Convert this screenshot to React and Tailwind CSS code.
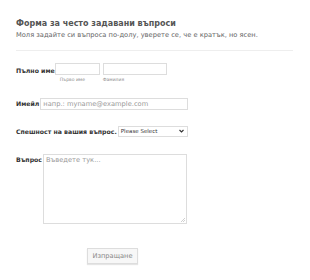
export default function App() {
  return (
    <div className="w-[310px] h-[280px] bg-white overflow-hidden font-['DejaVu_Sans',sans-serif] text-[#555]">
      <div className="pl-4 pr-[17px] pt-[19px]">
        <div className="text-[8px] font-bold text-[#555] leading-[10px]">Форма за често задавани въпроси</div>
        <div className="text-[6.7px] text-[#666] leading-[9px] mt-[2px]">Моля задайте си въпроса по-долу, уверете се, че е кратък, но ясен.</div>
        <div className="mt-[10px] border-t border-[#eee]"></div>
      </div>
      <div className="pl-4 pt-[12px]">
        <div className="flex items-start">
          <div className="text-[6.2px] font-bold text-[#333] pt-[3px]">Пълно име</div>
          <div className="flex flex-col">
            <div className="w-[45px] h-[12px] border border-[#ddd]"></div>
            <div className="text-[4.5px] text-[#888] mt-[2px] pl-[5px]">Първо име</div>
          </div>
          <div className="flex flex-col ml-[3px]">
            <div className="w-[64px] h-[12px] border border-[#ddd]"></div>
            <div className="text-[4.5px] text-[#888] mt-[2px]">Фамилия</div>
          </div>
        </div>
        <div className="flex items-start mt-[14px]">
          <div className="text-[6.2px] font-bold text-[#333] pt-[1px]">Имейл</div>
          <div className="w-[148px] h-[12px] border border-[#ddd] text-[6.7px] text-[#999] pl-[2px] leading-[10px] ml-[1px]">напр.: myname@example.com</div>
        </div>
        <div className="flex items-start mt-[16px]">
          <div className="text-[6.2px] font-bold text-[#333] pt-[1px]">Спешност на вашия въпрос.</div>
          <div className="w-[70px] h-[11px] border border-[#ddd] text-[5.5px] text-[#333] pl-[2px] leading-[9px] ml-[1px] flex items-center justify-between pr-[3px]">
            <span>Please Select</span>
            <svg width="5" height="4" viewBox="0 0 5 4"><path d="M0.5 1 L2.5 3 L4.5 1" fill="none" stroke="#333" strokeWidth="1.1" /></svg>
          </div>
        </div>
        <div className="flex items-start mt-[17px]">
          <div className="text-[6.2px] font-bold text-[#333] pt-[1px]">Въпрос</div>
          <div className="relative w-[144px] h-[70px] border border-[#ddd] text-[6.7px] text-[#999] pl-[2px] leading-[10px] ml-[1px]">
            Въведете тук...
            <svg className="absolute right-[1px] bottom-[1px]" width="5" height="5" viewBox="0 0 5 5"><path d="M5 1 L1 5 M5 3 L3 5" stroke="#bbb" strokeWidth="0.7" /></svg>
          </div>
        </div>
        <div className="pl-[71px] mt-[24px]">
          <div className="w-[51px] h-[16px] border border-[#ddd] bg-[#f7f7f7] text-[6.7px] text-[#888] flex items-center justify-center shadow-[0_1px_1px_rgba(0,0,0,0.1)]">Изпращане</div>
        </div>
      </div>
    </div>
  );
}
